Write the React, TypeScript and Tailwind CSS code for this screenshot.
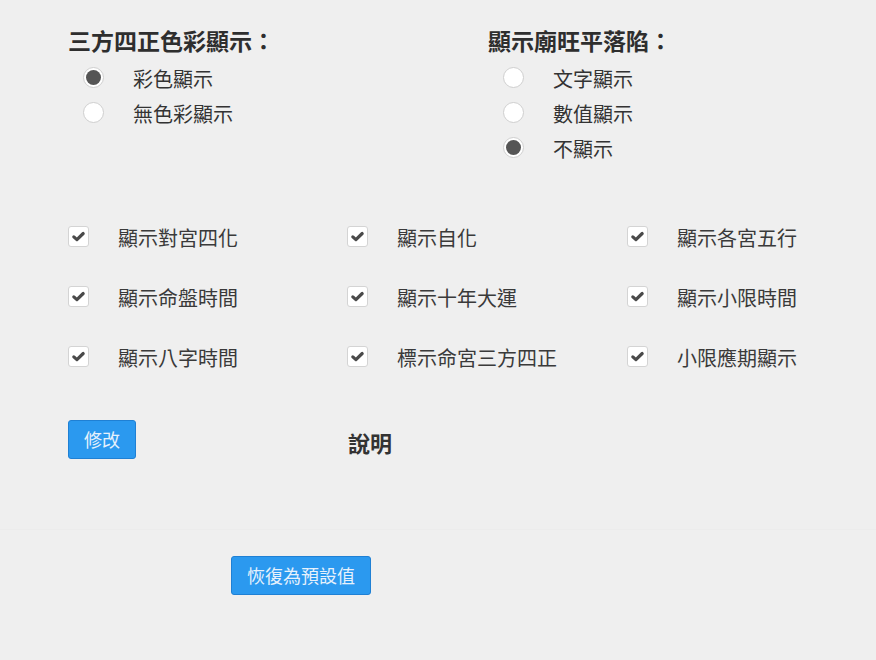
const font = { fontFamily: '"Noto Sans CJK TC", "Noto Sans", sans-serif' }

const colorModes = [
  { label: "彩色顯示", checked: true },
  { label: "無色彩顯示", checked: false },
]

const brightModes = [
  { label: "文字顯示", checked: false },
  { label: "數值顯示", checked: false },
  { label: "不顯示", checked: true },
]

const options = [
  "顯示對宮四化",
  "顯示自化",
  "顯示各宮五行",
  "顯示命盤時間",
  "顯示十年大運",
  "顯示小限時間",
  "顯示八字時間",
  "標示命宮三方四正",
  "小限應期顯示",
]

function Radio({ label, checked }: { label: string; checked: boolean }) {
  return (
    <div className="flex h-[35px] items-center pl-[15px]">
      <span className="flex h-[21px] w-[21px] shrink-0 items-center justify-center rounded-full border border-[#cfcfcf] bg-white">
        {checked && <span className="h-[15px] w-[15px] rounded-full bg-[#555]" />}
      </span>
      <span className="ml-[29px] pt-[3px] text-[20px] text-[#333]">{label}</span>
    </div>
  )
}

function Check({ label }: { label: string }) {
  return (
    <div className="flex h-[60px] items-center">
      <span className="flex h-[21px] w-[21px] shrink-0 items-center justify-center rounded-[3px] border border-[#d4d4d4] bg-white">
        <svg viewBox="0 0 16 16" className="h-[15px] w-[15px]">
          <path d="M3 8.4 L6.3 11.4 L13 4.8" fill="none" stroke="#4a4a4a" strokeWidth="3.4" strokeLinecap="round" strokeLinejoin="round" />
        </svg>
      </span>
      <span className="ml-[29px] pt-[4px] text-[20px] text-[#3a3a3a]">{label}</span>
    </div>
  )
}

export default function App() {
  return (
    <div className="min-h-[660px] w-[876px] bg-[#efefef]" style={font}>
      <div className="pl-[68px] pt-[24px]">
        <div className="flex items-start">
          <div className="w-[420px]">
            <h2 className="h-[33px] text-[23px] font-semibold leading-[33px] text-[#2e2e2e]">三方四正色彩顯示：</h2>
            <div className="mt-[3px]">
              {colorModes.map((m) => (
                <Radio key={m.label} {...m} />
              ))}
            </div>
          </div>
          <div>
            <h2 className="h-[33px] text-[23px] font-semibold leading-[33px] text-[#2e2e2e]">顯示廟旺平落陷：</h2>
            <div className="mt-[3px]">
              {brightModes.map((m) => (
                <Radio key={m.label} {...m} />
              ))}
            </div>
          </div>
        </div>

        <div className="mt-[41px] grid grid-cols-[279px_280px_1fr]">
          {options.map((o) => (
            <Check key={o} label={o} />
          ))}
        </div>

        <div className="mt-[34px] flex items-start">
          <button className="h-[39px] w-[68px] rounded-[3px] border border-[#1f80d4] bg-[#2b99ef] text-[18px] text-[#e6f1fc]">
            修改
          </button>
          <h3 className="ml-[212px] pt-[6px] text-[22px] font-bold text-[#333]">說明</h3>
        </div>
      </div>

      <div className="mt-[70px] border-t border-[#ececec] pt-[26px] pl-[231px]">
        <button className="h-[39px] w-[140px] rounded-[3px] border border-[#1f80d4] bg-[#2b99ef] text-[18px] text-[#e6f1fc]">
          恢復為預設值
        </button>
      </div>
    </div>
  )
}
